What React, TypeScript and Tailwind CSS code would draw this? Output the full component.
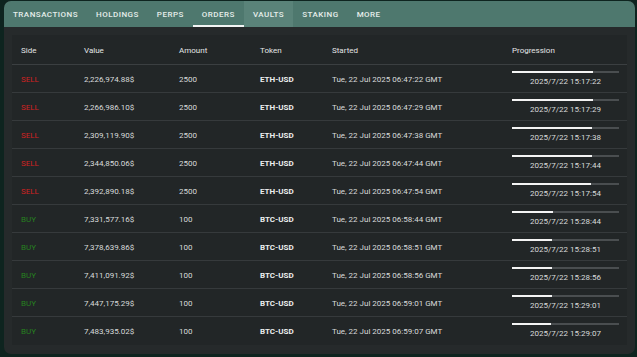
const tabs = ["TRANSACTIONS", "HOLDINGS", "PERPS", "ORDERS", "VAULTS", "STAKING", "MORE"];

type Order = {
  side: "SELL" | "BUY";
  value: string;
  amount: string;
  token: string;
  started: string;
  ends: string;
  progress: number;
};

const orders: Order[] = [
  { side: "SELL", value: "2,226,974.88$", amount: "2500", token: "ETH-USD", started: "Tue, 22 Jul 2025 06:47:22 GMT", ends: "2025/7/22 15:17:22", progress: 76 },
  { side: "SELL", value: "2,266,986.10$", amount: "2500", token: "ETH-USD", started: "Tue, 22 Jul 2025 06:47:29 GMT", ends: "2025/7/22 15:17:29", progress: 75.5 },
  { side: "SELL", value: "2,309,119.90$", amount: "2500", token: "ETH-USD", started: "Tue, 22 Jul 2025 06:47:38 GMT", ends: "2025/7/22 15:17:38", progress: 75 },
  { side: "SELL", value: "2,344,850.06$", amount: "2500", token: "ETH-USD", started: "Tue, 22 Jul 2025 06:47:44 GMT", ends: "2025/7/22 15:17:44", progress: 74.5 },
  { side: "SELL", value: "2,392,890.18$", amount: "2500", token: "ETH-USD", started: "Tue, 22 Jul 2025 06:47:54 GMT", ends: "2025/7/22 15:17:54", progress: 74 },
  { side: "BUY", value: "7,331,577.16$", amount: "100", token: "BTC-USD", started: "Tue, 22 Jul 2025 06:58:44 GMT", ends: "2025/7/22 15:28:44", progress: 38 },
  { side: "BUY", value: "7,378,639.86$", amount: "100", token: "BTC-USD", started: "Tue, 22 Jul 2025 06:58:51 GMT", ends: "2025/7/22 15:28:51", progress: 37.5 },
  { side: "BUY", value: "7,411,091.92$", amount: "100", token: "BTC-USD", started: "Tue, 22 Jul 2025 06:58:56 GMT", ends: "2025/7/22 15:28:56", progress: 37 },
  { side: "BUY", value: "7,447,175.29$", amount: "100", token: "BTC-USD", started: "Tue, 22 Jul 2025 06:59:01 GMT", ends: "2025/7/22 15:29:01", progress: 37 },
  { side: "BUY", value: "7,483,935.02$", amount: "100", token: "BTC-USD", started: "Tue, 22 Jul 2025 06:59:07 GMT", ends: "2025/7/22 15:29:07", progress: 36.5 },
];

const cols = "grid grid-cols-[72px_95px_81px_72px_180px_1fr] items-center";

export default function App() {
  return (
    <div
      className="w-[637px] h-[357px] bg-[#0e241f] pt-[1px] pl-[4px] overflow-hidden"
      style={{ fontFamily: "Roboto, 'Liberation Sans', sans-serif" }}
    >
      <div className="w-[631px] h-[353px] rounded-[7px] bg-[#262a2b] overflow-hidden flex flex-col">
        {/* tab bar */}
        <div className="h-[26px] bg-[#4e786e] flex items-stretch shrink-0">
          {tabs.map((t) => (
            <div
              key={t}
              className={`relative flex items-center px-[9px] pt-[1px] text-[8px] font-medium tracking-[0.06em] text-[#e6eeeb] ${
                t === "VAULTS" ? "bg-[#5a8379]" : ""
              }`}
            >
              {t}
              {t === "ORDERS" && <div className="absolute left-0 right-0 bottom-0 h-[2px] bg-[#f2f5f4]" />}
            </div>
          ))}
        </div>

        {/* table */}
        <div className="mx-[8px] mt-[8px] bg-[#222627] text-[8px] text-[#d8dbdb]">
          <div className={`${cols} h-[30px] pt-[3px] border-b border-[#3b3f41] text-[#e2e5e5]`}>
            <div className="pl-[9px]">Side</div>
            <div>Value</div>
            <div>Amount</div>
            <div>Token</div>
            <div>Started</div>
            <div>Progression</div>
          </div>
          {orders.map((o, i) => (
            <div
              key={i}
              className={`${cols} h-[28px] ${i < orders.length - 1 ? "border-b border-[#363a3c]" : ""}`}
            >
              <div className={`pl-[9px] pt-[2px] ${o.side === "SELL" ? "text-[#d02222]" : "text-[#26801f]"}`}>{o.side}</div>
              <div className="pt-[2px]">{o.value}</div>
              <div className="pt-[2px]">{o.amount}</div>
              <div className="pt-[2px] font-bold text-[#eceeee]">{o.token}</div>
              <div className="pt-[2px]">{o.started}</div>
              <div className="self-start pt-[6px] pr-[8px] flex flex-col items-center">
                <div className="w-full h-[2px] bg-[#4a4e50]">
                  <div className="h-full bg-[#f4f4f4]" style={{ width: `${o.progress}%` }} />
                </div>
                <div className="mt-[4px] leading-[10px]">{o.ends}</div>
              </div>
            </div>
          ))}
        </div>
      </div>
    </div>
  );
}
